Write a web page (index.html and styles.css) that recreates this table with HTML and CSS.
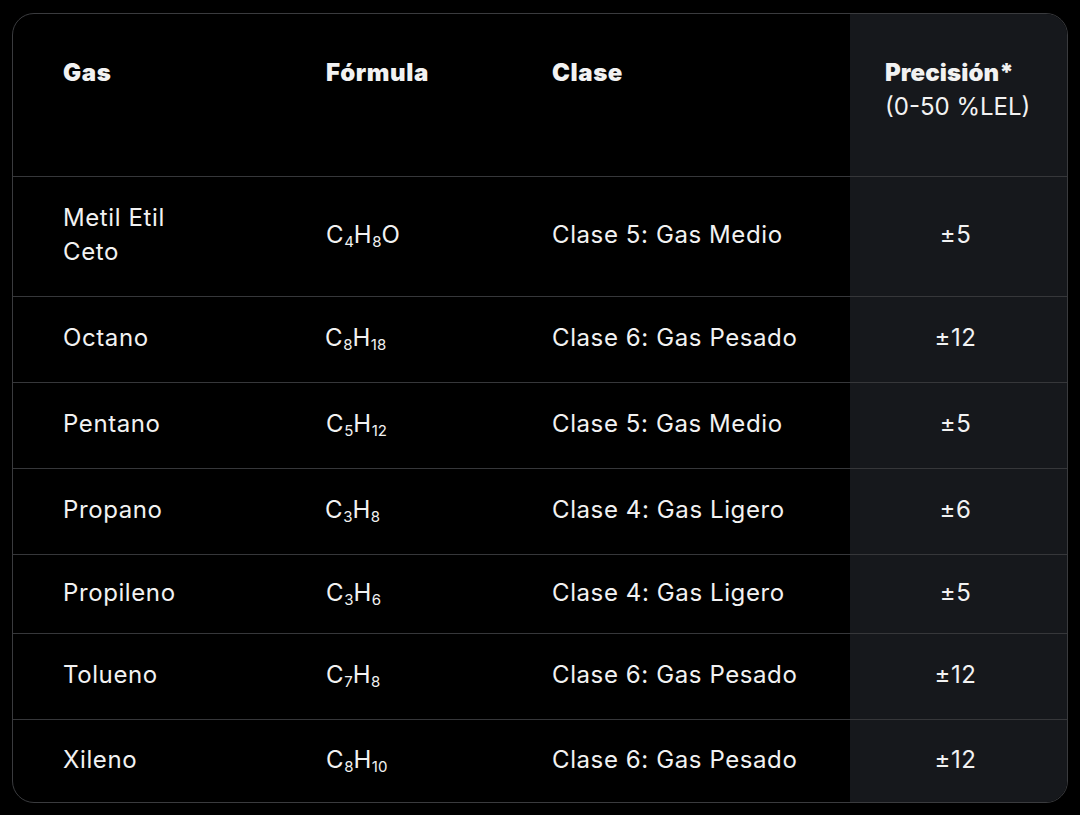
FILE: index.html
```html
<!DOCTYPE html>
<html lang="es">
<head>
<meta charset="utf-8">
<title>Gases</title>
<link rel="stylesheet" href="styles.css">
</head>
<body>
<div class="card">
  <table class="gas-table">
    <colgroup>
      <col class="c1"><col class="c2"><col class="c3"><col class="c4">
    </colgroup>
    <thead>
      <tr class="row-head">
        <th>Gas</th>
        <th>Fórmula</th>
        <th>Clase</th>
        <th class="prec">Precisión*<br><span class="range">(0-50 %LEL)</span></th>
      </tr>
    </thead>
    <tbody>
      <tr class="row-tall">
        <td>Metil Etil<br>Ceto</td>
        <td>C<sub>4</sub>H<sub>8</sub>O</td>
        <td>Clase 5: Gas Medio</td>
        <td class="val">±5</td>
      </tr>
      <tr>
        <td>Octano</td>
        <td class="f-tight">C<sub>8</sub>H<sub>18</sub></td>
        <td>Clase 6: Gas Pesado</td>
        <td class="val">±12</td>
      </tr>
      <tr>
        <td>Pentano</td>
        <td>C<sub>5</sub>H<sub>12</sub></td>
        <td>Clase 5: Gas Medio</td>
        <td class="val">±5</td>
      </tr>
      <tr>
        <td>Propano</td>
        <td class="f-tight">C<sub>3</sub>H<sub>8</sub></td>
        <td>Clase 4: Gas Ligero</td>
        <td class="val">±6</td>
      </tr>
      <tr class="row-short">
        <td>Propileno</td>
        <td>C<sub>3</sub>H<sub>6</sub></td>
        <td>Clase 4: Gas Ligero</td>
        <td class="val">±5</td>
      </tr>
      <tr>
        <td>Tolueno</td>
        <td>C<sub>7</sub>H<sub>8</sub></td>
        <td>Clase 6: Gas Pesado</td>
        <td class="val">±12</td>
      </tr>
      <tr class="row-last">
        <td>Xileno</td>
        <td>C<sub>8</sub>H<sub>10</sub></td>
        <td>Clase 6: Gas Pesado</td>
        <td class="val">±12</td>
      </tr>
    </tbody>
  </table>
</div>
</body>
</html>
```

FILE: styles.css
```css
html, body {
  background: #000;
}
body {
  margin: 13px 12px 12px 12px;
  font-family: "Inter", "Liberation Sans", sans-serif;
  color: #f2f2f2;
}
.card {
  width: 1054px;
  height: 788px;
  border: 1px solid #3a3b3e;
  border-radius: 22px;
  overflow: hidden;
}
.gas-table {
  width: 100%;
  border-collapse: separate;
  border-spacing: 0;
  table-layout: fixed;
  font-size: 24px;
  line-height: 34px;
  letter-spacing: 0.6px;
}
.c1 { width: 263px; }
.c2 { width: 226px; }
.c3 { width: 348px; }
.c4 { width: 217px; background: #16181c; }

th {
  text-align: left;
  vertical-align: top;
  font-weight: 900;
  padding: 42px 0 0 50px;
  border-bottom: 1px solid #36373a;
  letter-spacing: 0.6px;
}
.row-head { height: 163px; }
th.prec { padding-left: 35px; letter-spacing: 0.1px; }
.range { font-weight: 400; letter-spacing: 0; }

td {
  padding: 0 0 3px 50px;
  vertical-align: middle;
  border-bottom: 1px solid #36373a;
  font-weight: 400;
}
tbody tr { height: 86px; }
tbody tr.row-tall { height: 120px; }
tbody tr.row-short { height: 79px; }
tbody tr.row-last { height: 82px; }
tbody tr.row-last td { border-bottom: none; }
td.val { padding-left: 0; padding-right: 6px; text-align: center; }
td.f-tight { padding-left: 49px; }

sub {
  font-size: 15px;
  line-height: 0;
  vertical-align: -4px;
  letter-spacing: 0;
}
```
